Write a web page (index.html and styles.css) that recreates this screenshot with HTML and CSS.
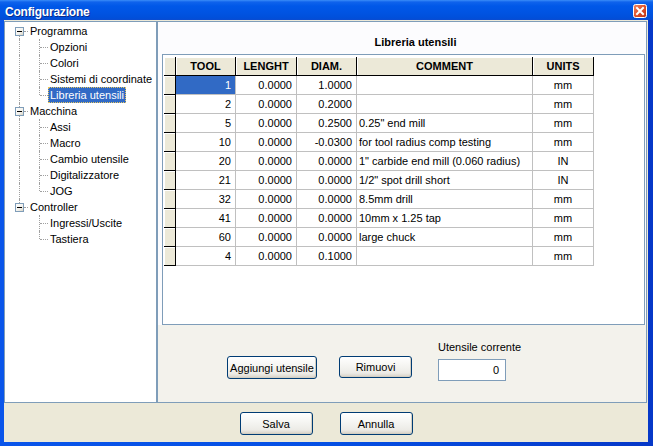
FILE: index.html
```html
<!DOCTYPE html>
<html>
<head>
<meta charset="utf-8">
<link rel="stylesheet" href="styles.css">
</head>
<body>
<div class="window">
  <div class="titlebar">
    <span class="title">Configurazione</span>
    <span class="close">
      <svg width="14" height="14" viewBox="0 0 14 14">
        <defs>
          <linearGradient id="cg" x1="0" y1="0" x2="1" y2="1">
            <stop offset="0" stop-color="#F08A66"/>
            <stop offset="0.5" stop-color="#E0502A"/>
            <stop offset="1" stop-color="#B83212"/>
          </linearGradient>
        </defs>
        <rect x="0.5" y="0.5" width="13" height="13" rx="2" fill="url(#cg)" stroke="#FFFFFF"/>
        <path d="M4 4 L10 10 M10 4 L4 10" stroke="#FFFFFF" stroke-width="2" stroke-linecap="square"/>
      </svg>
    </span>
  </div>
  <div class="client">
    <div class="panes">
      <div class="tree">
        <div class="row root first"><span class="exp"></span><span class="hl"></span><span class="lbl">Programma</span></div>
        <div class="row child inner"><span class="lbl">Opzioni</span></div>
        <div class="row child inner"><span class="lbl">Colori</span></div>
        <div class="row child inner"><span class="lbl">Sistemi di coordinate</span></div>
        <div class="row child inner lastc"><span class="lbl sel">Libreria utensili</span></div>
        <div class="row root mid"><span class="exp"></span><span class="hl"></span><span class="lbl">Macchina</span></div>
        <div class="row child inner"><span class="lbl">Assi</span></div>
        <div class="row child inner"><span class="lbl">Macro</span></div>
        <div class="row child inner"><span class="lbl">Cambio utensile</span></div>
        <div class="row child inner"><span class="lbl">Digitalizzatore</span></div>
        <div class="row child inner lastc"><span class="lbl">JOG</span></div>
        <div class="row root last"><span class="exp"></span><span class="hl"></span><span class="lbl">Controller</span></div>
        <div class="row child"><span class="lbl">Ingressi/Uscite</span></div>
        <div class="row child lastc"><span class="lbl">Tastiera</span></div>
      </div>
      <div class="panel">
        <div class="lib-top">
          <div class="lib-title">Libreria utensili</div>
          <div class="grid-box">
            <table class="grid">
              <colgroup>
                <col class="c-ind"><col class="c-tool"><col class="c-len"><col class="c-diam"><col class="c-com"><col class="c-unit">
              </colgroup>
              <thead>
                <tr><th></th><th>TOOL</th><th>LENGHT</th><th>DIAM.</th><th>COMMENT</th><th>UNITS</th></tr>
              </thead>
              <tbody>
                <tr><td class="ind"></td><td class="num sel">1</td><td class="num">0.0000</td><td class="num">1.0000</td><td class="txt"></td><td class="ctr">mm</td></tr>
                <tr><td class="ind"></td><td class="num">2</td><td class="num">0.0000</td><td class="num">0.2000</td><td class="txt"></td><td class="ctr">mm</td></tr>
                <tr><td class="ind"></td><td class="num">5</td><td class="num">0.0000</td><td class="num">0.2500</td><td class="txt">0.25" end mill</td><td class="ctr">mm</td></tr>
                <tr><td class="ind"></td><td class="num">10</td><td class="num">0.0000</td><td class="num">-0.0300</td><td class="txt">for tool radius comp testing</td><td class="ctr">mm</td></tr>
                <tr><td class="ind"></td><td class="num">20</td><td class="num">0.0000</td><td class="num">0.0000</td><td class="txt">1" carbide end mill (0.060 radius)</td><td class="ctr">IN</td></tr>
                <tr><td class="ind"></td><td class="num">21</td><td class="num">0.0000</td><td class="num">0.0000</td><td class="txt">1/2" spot drill short</td><td class="ctr">IN</td></tr>
                <tr><td class="ind"></td><td class="num">32</td><td class="num">0.0000</td><td class="num">0.0000</td><td class="txt">8.5mm drill</td><td class="ctr">mm</td></tr>
                <tr><td class="ind"></td><td class="num">41</td><td class="num">0.0000</td><td class="num">0.0000</td><td class="txt">10mm x 1.25 tap</td><td class="ctr">mm</td></tr>
                <tr><td class="ind"></td><td class="num">60</td><td class="num">0.0000</td><td class="num">0.0000</td><td class="txt">large chuck</td><td class="ctr">mm</td></tr>
                <tr><td class="ind"></td><td class="num">4</td><td class="num">0.0000</td><td class="num">0.1000</td><td class="txt"></td><td class="ctr">mm</td></tr>
              </tbody>
            </table>
          </div>
        </div>
        <div class="lib-actions">
          <button class="btn btn-add">Aggiungi utensile</button>
          <button class="btn btn-rem">Rimuovi</button>
          <div class="current">
            <div class="current-lbl">Utensile corrente</div>
            <div class="current-box">0</div>
          </div>
        </div>
      </div>
    </div>
    <div class="footer">
      <button class="btn btn-foot">Salva</button>
      <button class="btn btn-foot">Annulla</button>
    </div>
  </div>
</div>
</body>
</html>
```
FILE: styles.css
```css
* { box-sizing: border-box; }
html, body { margin: 0; padding: 0; }
body {
  width: 653px;
  height: 446px;
  overflow: hidden;
  font-family: "Liberation Sans", Arial, sans-serif;
  font-size: 11px;
  color: #000;
}
.window {
  width: 653px;
  height: 446px;
  display: flex;
  flex-direction: column;
  background: linear-gradient(90deg, #0A55EA 0, #0550E4 50%, #0638C8 100%);
}
.titlebar {
  height: 20px;
  flex: none;
  display: flex;
  justify-content: space-between;
  align-items: flex-start;
  padding: 0 6px 0 5px;
  background: linear-gradient(#3A8DF8 0, #0F63EC 2px, #0058E8 6px, #0054E3 12px, #004FDA 18px, #0A4BD0 20px);
}
.title {
  color: #fff;
  font-weight: bold;
  font-size: 12px;
  letter-spacing: -0.2px;
  line-height: 16px;
  padding-top: 4px;
  text-shadow: 1px 1px 0 #0A2A8A;
}
.close {
  display: block;
  width: 14px;
  height: 14px;
  margin-top: 4px;
}
.close svg { display: block; }
.client {
  flex: 1;
  margin: 0 5px 4px 4px;
  background: #ECE9D8;
  display: flex;
  flex-direction: column;
  padding-top: 1px;
}
.panes {
  height: 382px;
  display: flex;
  padding-right: 1px;
}
.tree {
  width: 153px;
  background: #fff;
  border: 1px solid #7F9DB9;
  padding-top: 1px;
}
.row {
  height: 16px;
  display: flex;
  align-items: center;
  position: relative;
  white-space: nowrap;
}
.lbl {
  line-height: 16px;
  height: 16px;
  padding: 0 2px;
}
.lbl.sel {
  background: #316AC5;
  color: #fff;
  outline: 1px dotted #E8C660;
  outline-offset: -1px;
}
.root .exp {
  position: relative;
  z-index: 1;
  width: 9px;
  height: 9px;
  margin-left: 10px;
  margin-top: 1px;
  border: 1px solid #7F9DB9;
  background: linear-gradient(135deg, #fff 0, #F2F1EC 60%, #D8D3C4 100%);
}
.root .exp::after {
  content: "";
  position: absolute;
  left: 1px;
  top: 3px;
  width: 5px;
  height: 1px;
  background: #000;
}
.root .hl {
  width: 4px;
  border-top: 1px dotted #A0A0A0;
  margin-top: 1px;
}
.root::before {
  content: "";
  position: absolute;
  left: 14px;
  border-left: 1px dotted #A0A0A0;
}
.root.first::before { top: 9px; bottom: 0; }
.root.mid::before { top: 0; bottom: 0; }
.root.last::before { top: 0; height: 8px; }
.child .lbl { margin-left: 43px; }
.child::before {
  content: "";
  position: absolute;
  left: 34px;
  top: 0;
  bottom: 0;
  border-left: 1px dotted #A0A0A0;
}
.child.lastc::before { bottom: 8px; }
.child::after {
  content: "";
  position: absolute;
  left: 35px;
  top: 8px;
  width: 8px;
  border-top: 1px dotted #A0A0A0;
}
.child.inner .lbl { position: relative; }
.child.inner > .lbl::before {
  content: "";
  position: absolute;
  left: -29px;
  top: 0;
  bottom: 0;
  border-left: 1px dotted #A0A0A0;
}
.panel {
  width: 490px;
  border: 1px solid #7F9DB9;
  background: #F3F2EC;
  display: flex;
  flex-direction: column;
}
.lib-top {
  background: #FCFCFE;
  padding: 0 1px 0 4px;
}
.lib-title {
  height: 32px;
  padding-top: 13px;
  padding-left: 24px;
  line-height: 14px;
  font-weight: bold;
  text-align: center;
}
.grid-box {
  height: 271px;
  background: #fff;
  border: 1px solid #7F9DB9;
  padding: 2px 0 0 1px;
}
.grid {
  table-layout: fixed;
  border-collapse: separate;
  border-spacing: 0;
  width: 430px;
  font-size: 11px;
}
.c-ind { width: 12px; }
.c-tool { width: 60px; }
.c-len { width: 61px; }
.c-diam { width: 60px; }
.c-com { width: 176px; }
.c-unit { width: 61px; }
.grid th {
  background: #ECE9D8;
  font-weight: bold;
  text-align: center;
  line-height: 18px;
  padding: 0;
  border-right: 1px solid #000;
  border-bottom: 1px solid #000;
  box-shadow: inset 1px 1px 0 #fff;
}
.grid td {
  padding: 0 4px;
  line-height: 18px;
  height: 19px;
  border-right: 1px solid #C0C0C0;
  border-bottom: 1px solid #C0C0C0;
  white-space: nowrap;
  overflow: hidden;
}
.grid td.ind {
  background: #ECE9D8;
  border-right: 1px solid #000;
  border-bottom: 1px solid #000;
  box-shadow: inset 1px 1px 0 #fff;
  padding: 0;
}
.grid td.num { text-align: right; }
.grid td.txt { text-align: left; padding-left: 2px; }
.grid td.ctr { text-align: center; }
.grid td.sel { background: #316AC5; color: #fff; }
.lib-actions {
  flex: 1;
  display: flex;
  align-items: flex-start;
  padding: 14px 0 0 69px;
}
.btn {
  font-family: "Liberation Sans", Arial, sans-serif;
  font-size: 11px;
  color: #000;
  height: 23px;
  padding: 0;
  border: 1px solid #003C74;
  border-radius: 3px;
  background: linear-gradient(#FFFFFF 0, #F6F6F3 40%, #ECEBE6 80%, #D6D0C5 100%);
  box-shadow: inset -1px -1px 0 #D4CFC2;
}
.btn-add { width: 90px; margin-top: 17px; }
.btn-rem { width: 73px; height: 22px; margin-top: 17px; margin-left: 22px; }
.current { margin-left: 26px; }
.current-lbl { line-height: 14px; padding-top: 1px; }
.current-box {
  margin-top: 5px;
  width: 68px;
  height: 22px;
  border: 1px solid #7F9DB9;
  background: #fff;
  text-align: right;
  line-height: 20px;
  padding-right: 6px;
}
.footer {
  flex: 1;
  display: flex;
  justify-content: center;
  align-items: flex-start;
  gap: 27px;
  padding-top: 9px;
}
.btn-foot { width: 73px; }
```
